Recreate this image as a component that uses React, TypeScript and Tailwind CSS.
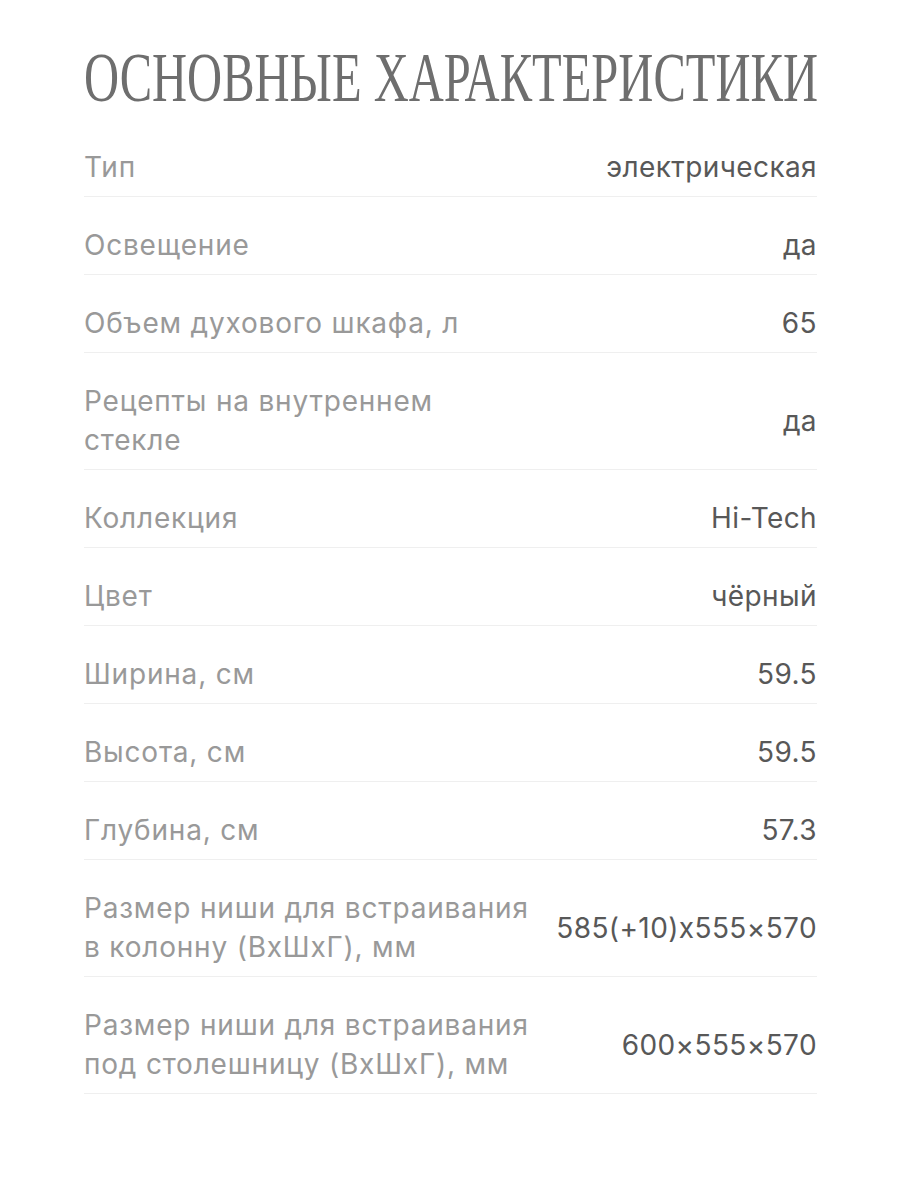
import React from 'react';

interface Spec {
    label: string;
    value: string;
}

// line breaks follow the reference layout
const specs: Spec[] = [
    { label: 'Тип', value: 'электрическая' },
    { label: 'Освещение', value: 'да' },
    { label: 'Объем духового шкафа, л', value: '65' },
    { label: 'Рецепты на внутреннем\nстекле', value: 'да' },
    { label: 'Коллекция', value: 'Hi-Tech' },
    { label: 'Цвет', value: 'чёрный' },
    { label: 'Ширина, см', value: '59.5' },
    { label: 'Высота, см', value: '59.5' },
    { label: 'Глубина, см', value: '57.3' },
    { label: 'Размер ниши для встраивания\nв колонну (ВхШхГ), мм', value: '585(+10)x555×570' },
    { label: 'Размер ниши для встраивания\nпод столешницу (ВхШхГ), мм', value: '600×555×570' },
];

const App: React.FC = () => {
    return (
        <div className="min-h-[1200px] bg-white pl-[84px] pr-[83px] font-['Inter','Noto_Sans',sans-serif]">
            <h2 className="h-[119px] pt-[39px] overflow-hidden whitespace-nowrap">
                <span className="inline-block origin-left scale-x-[0.6935] font-['Liberation_Serif',serif] text-[70px] leading-[77px] font-normal text-[#6e6e6e]">
                    ОСНОВНЫЕ ХАРАКТЕРИСТИКИ
                </span>
            </h2>
            <div className="flex flex-col">
                {specs.map((spec, index) => (
                    <div
                        key={index}
                        className="flex items-center justify-between gap-4 border-b border-[#efefef] pt-[29px] pb-[9px]"
                    >
                        <div className="flex-1 whitespace-pre-line text-[28px] leading-[39px] tracking-[0.8px] text-[#999999]">
                            {spec.label}
                        </div>
                        <div className="text-right text-[28px] leading-[39px] tracking-[0.4px] text-[#585858] whitespace-nowrap">
                            {spec.value}
                        </div>
                    </div>
                ))}
            </div>
        </div>
    );
};

export default App;
